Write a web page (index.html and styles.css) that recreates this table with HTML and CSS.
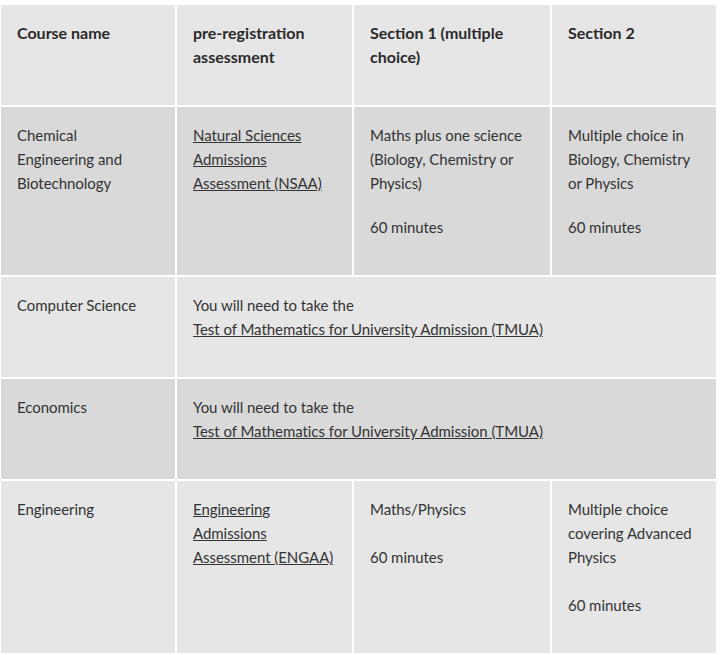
FILE: index.html
```html
<!DOCTYPE html>
<html lang="en">
<head>
<meta charset="utf-8">
<title>Admissions assessments</title>
<link rel="stylesheet" href="styles.css">
</head>
<body>
<table class="tests">
  <colgroup>
    <col class="c1"><col class="c2"><col class="c3"><col class="c4">
  </colgroup>
  <thead>
    <tr class="row-light">
      <th><p>Course name</p></th>
      <th><p>pre-registration assessment</p></th>
      <th><p>Section 1 (multiple choice)</p></th>
      <th><p>Section 2</p></th>
    </tr>
  </thead>
  <tbody>
    <tr class="row-dark">
      <td class="course"><p>Chemical Engineering and Biotechnology</p></td>
      <td><p><a href="#">Natural Sciences Admissions Assessment (NSAA)</a></p></td>
      <td><p>Maths plus one science (Biology, Chemistry or Physics)</p><p>60 minutes</p></td>
      <td><p>Multiple choice in Biology, Chemistry or Physics</p><p>60 minutes</p></td>
    </tr>
    <tr class="row-light">
      <td class="course"><p>Computer Science</p></td>
      <td colspan="3"><p>You will need to take the<br><a href="#">Test of Mathematics for University Admission (TMUA)</a></p></td>
    </tr>
    <tr class="row-dark">
      <td class="course"><p>Economics</p></td>
      <td colspan="3"><p>You will need to take the<br><a href="#">Test of Mathematics for University Admission (TMUA)</a></p></td>
    </tr>
    <tr class="row-light">
      <td class="course"><p>Engineering</p></td>
      <td><p><a href="#">Engineering Admissions Assessment (ENGAA)</a></p></td>
      <td><p>Maths/Physics<br><br>60 minutes</p></td>
      <td><p>Multiple choice covering Advanced Physics<br><br>60 minutes</p></td>
    </tr>
    <tr class="row-dark">
      <td class="course"><p>Mathematics</p></td>
      <td colspan="3"><p>You will need to take the<br><a href="#">Sixth Term Examination Paper (STEP)</a></p></td>
    </tr>
  </tbody>
</table>
</body>
</html>
```

FILE: styles.css
```css
html, body {
  margin: 0;
  padding: 0;
  background: #ffffff;
}

body {
  font-family: Lato, "Liberation Sans", sans-serif;
  font-size: 15px;
  line-height: 24px;
  color: #333333;
}

.tests {
  table-layout: fixed;
  width: 719px;
  border-collapse: separate;
  border-spacing: 2px;
  margin: 3px 0 0 -1px;
}

.c1 { width: 174px; }
.c2 { width: 175px; }
.c3 { width: 196px; }
.c4 { width: 164px; }

.tests th,
.tests td {
  padding: 16px;
  text-align: left;
  vertical-align: top;
}

.tests td {
  letter-spacing: -0.05px;
}

.tests td.course {
  padding-right: 24px;
}

.tests th {
  font-size: 16px;
  font-weight: 700;
  color: #2a2a2a;
}

.tests p {
  margin: 0 0 20px 0;
}

.row-light th,
.row-light td {
  background: #e6e6e6;
}

.row-dark td {
  background: #d9d9d9;
}

.tests a {
  color: #333333;
  text-decoration: underline;
}
```
